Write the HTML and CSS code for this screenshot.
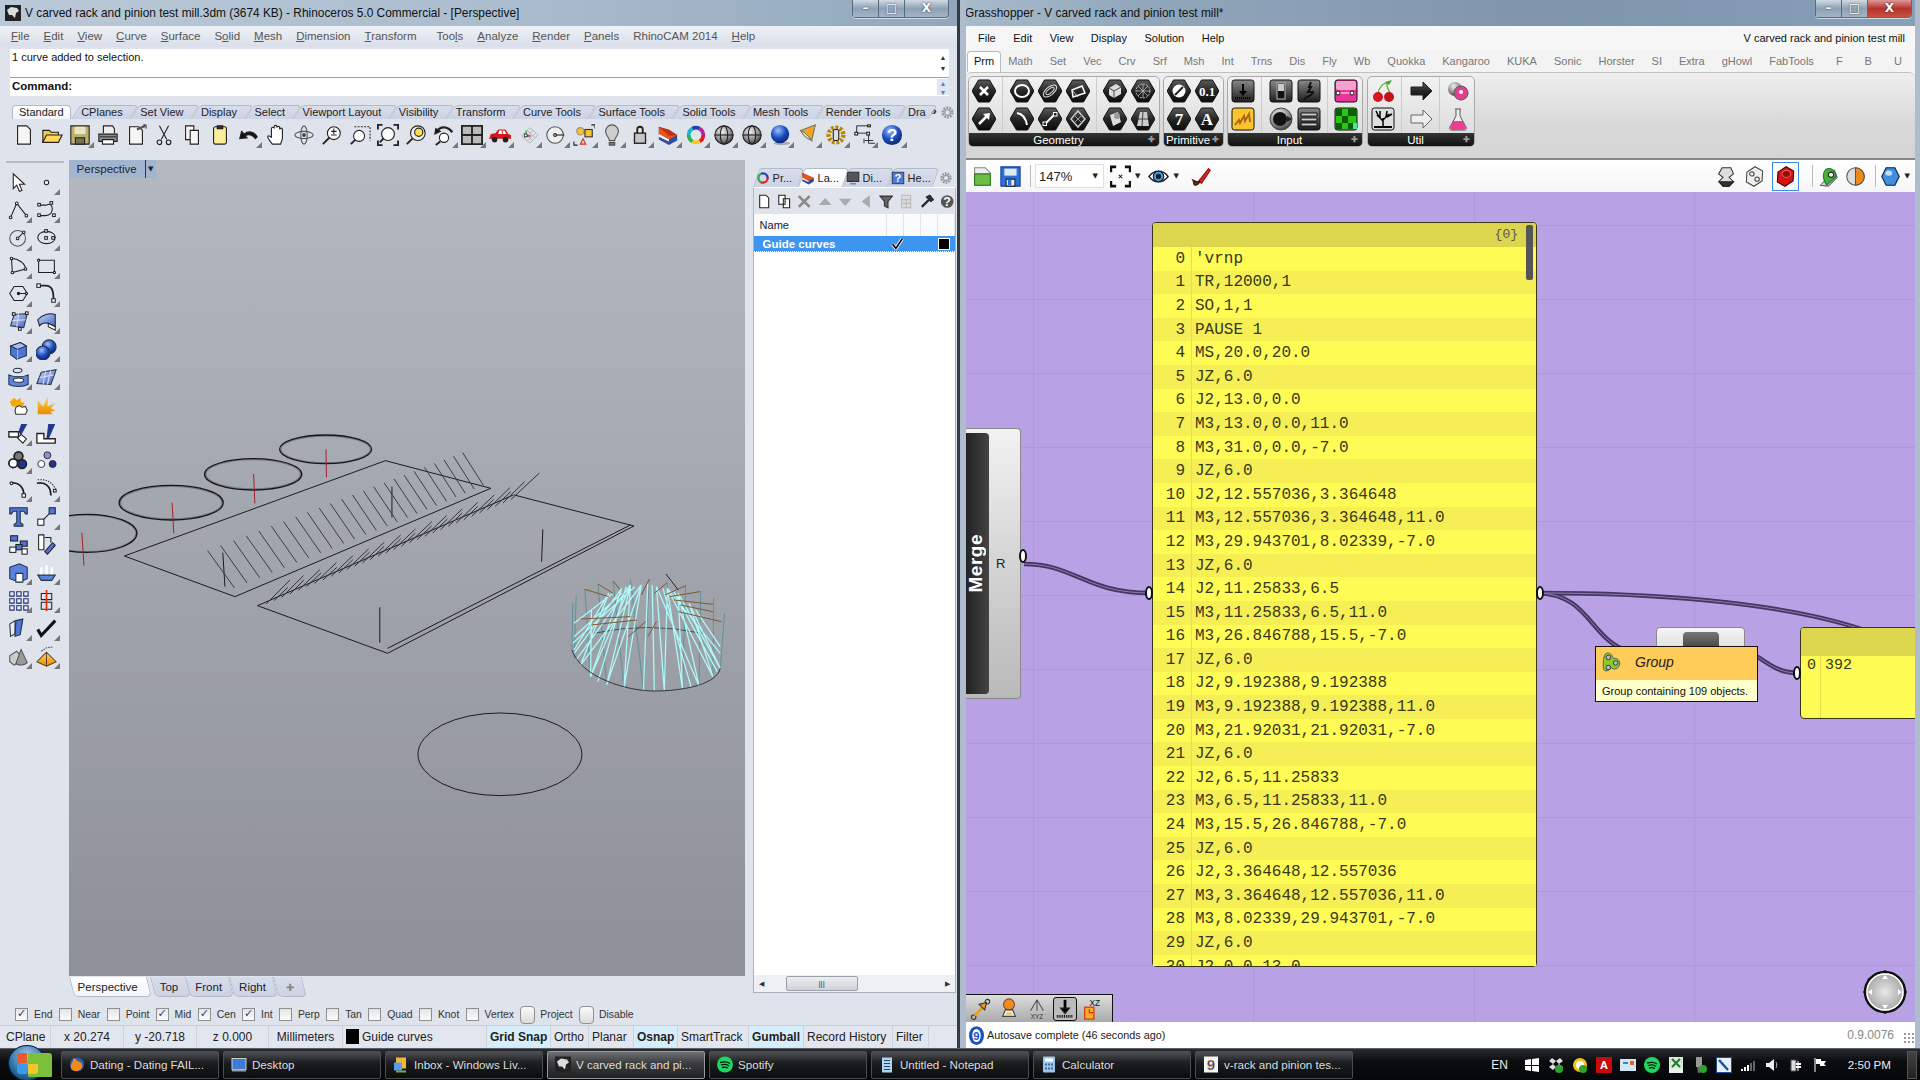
FILE: index.html
```html
<!DOCTYPE html>
<html lang="en">
<head>
  <meta charset="UTF-8">
  <title>Rhinoceros and Grasshopper</title>
  <link rel="stylesheet" href="styles.css">
</head>
<body>
<svg class="defs" aria-hidden="true">
  <defs>
    <linearGradient id="hexg" x1="0" y1="0" x2="0" y2="1"><stop offset="0" stop-color="#5c5c5c"/><stop offset=".5" stop-color="#262626"/><stop offset="1" stop-color="#0c0c0c"/></linearGradient>
    <linearGradient id="boxg" x1="0" y1="0" x2="0" y2="1"><stop offset="0" stop-color="#8a8a8a"/><stop offset="1" stop-color="#1c1c1c"/></linearGradient>
    <radialGradient id="grey" cx=".4" cy=".3" r=".8"><stop offset="0" stop-color="#eee"/><stop offset=".6" stop-color="#888"/><stop offset="1" stop-color="#222"/></radialGradient>
    <radialGradient id="blue" cx=".4" cy=".3" r=".8"><stop offset="0" stop-color="#9fc0ff"/><stop offset=".5" stop-color="#1c4fc0"/><stop offset="1" stop-color="#081a60"/></radialGradient>
    <radialGradient id="dial" cx=".5" cy=".5" r=".5"><stop offset="0" stop-color="#e8e8e8"/><stop offset="1" stop-color="#a4a4a4"/></radialGradient>
    <linearGradient id="bl" x1="0" y1="0" x2="1" y2="1"><stop offset="0" stop-color="#c8d6f5"/><stop offset="1" stop-color="#3f63c8"/></linearGradient>
    <linearGradient id="gold" x1="0" y1="0" x2="0" y2="1"><stop offset="0" stop-color="#ffd75a"/><stop offset="1" stop-color="#e98a00"/></linearGradient>
    <path id="hex" d="M6.5 1h11L24 12l-6.5 11h-11L0 12z" fill="url(#hexg)" stroke="#111"/>
    <rect id="bx" x="1" y="1" width="22" height="22" rx="2.5" fill="url(#boxg)" stroke="#111"/>
  </defs>
</svg>

<main class="desk">
  <!-- Rhino window -->
  <section class="win rhino">
    <header class="title">
      <svg class="i app sn" viewBox="0 0 16 16"><rect width="16" height="16" fill="#222"/><path d="M2 5l4-3 6 1 2 3-3 2-1 5-3-3-3 0z" fill="#ddd"/></svg>
      <span class="title-text">V carved rack and pinion test mill.3dm (3674 KB) - Rhinoceros 5.0 Commercial - [Perspective]</span>
      <div class="caps"><span class="cap">&#8211;</span><span class="cap">&#9633;</span><span class="cap close">X</span></div>
    </header>
    <nav class="menu">
      <span><u>F</u>ile</span><span><u>E</u>dit</span><span><u>V</u>iew</span><span><u>C</u>urve</span><span><u>S</u>urface</span><span>S<u>o</u>lid</span><span><u>M</u>esh</span><span><u>D</u>imension</span><span class="wide"><u>T</u>ransform</span><span>Too<u>l</u>s</span><span><u>A</u>nalyze</span><span><u>R</u>ender</span><span><u>P</u>anels</span><span>RhinoCAM 2014</span><span><u>H</u>elp</span>
    </nav>
    <div class="cmd-box history"><span>1 curve added to selection.</span><div class="spin"><i>&#9650;</i><i>&#9660;</i></div></div>
    <div class="cmd-box prompt"><b>Command:</b><div class="spin boxed"><i>&#9650;</i><i>&#9660;</i></div></div>

    <div class="tabs tool-tabs">
      <span class="tab on">Standard</span><span class="tab">CPlanes</span><span class="tab">Set View</span><span class="tab">Display</span><span class="tab">Select</span><span class="tab">Viewport Layout</span><span class="tab">Visibility</span><span class="tab">Transform</span><span class="tab">Curve Tools</span><span class="tab">Surface Tools</span><span class="tab">Solid Tools</span><span class="tab">Mesh Tools</span><span class="tab">Render Tools</span><span class="tab last">Dra</span>
      <b class="more">&raquo;</b>
      <svg class="i gear" viewBox="0 0 16 16"><circle cx="8" cy="8" r="5" stroke="#999" stroke-width="3" stroke-dasharray="2 1.1"/><circle cx="8" cy="8" r="3" stroke="#999"/></svg>
    </div>

    <div class="bar">
      <span class="t"><svg class="i" viewBox="0 0 24 24"><path d="M5 2h10l4 4v16H5z" fill="#f6f6f6"/></svg></span>
      <span class="t"><svg class="i" viewBox="0 0 24 24"><path d="M2 20V7h7l2 2h8v3" fill="#f2c94a"/><path d="M2 20l4-8h17l-4 8z" fill="#ffd75a"/></svg></span>
      <span class="t fly"><svg class="i" viewBox="0 0 24 24"><path d="M2 2h20v20H2z" fill="#bdb06e"/><path d="M6 3h12v8H6z" fill="#e8e4c8" stroke="none"/><path d="M7 15h10v7H7z" fill="#77704a"/></svg></span>
      <span class="t"><svg class="i" viewBox="0 0 24 24"><path d="M7 10V2h10l2 3v5" fill="#eee"/><path d="M2 11h20v8H2z" fill="#8d8d8d"/><path d="M6 17h12v5H6z" fill="#fff"/><path d="M3 14h18" stroke="#333"/></svg></span>
      <span class="t"><svg class="i" viewBox="0 0 24 24"><path d="M5 3h10l4 4v15H5z" fill="#f6f6f6"/><path d="M13 6l9-4" stroke-width="2.5" stroke="#555"/><path d="M20 1h3v4" stroke-width="1"/></svg></span>
      <span class="t"><svg class="i" viewBox="0 0 24 24"><path d="M7 2l8 15M17 2L9 17"/><circle cx="7" cy="20" r="2.5"/><circle cx="17" cy="20" r="2.5"/></svg></span>
      <span class="t"><svg class="i" viewBox="0 0 24 24"><path d="M5 2h9v15H5z" fill="#f6f6f6"/><path d="M10 7h9v15h-9z" fill="#f6f6f6"/></svg></span>
      <span class="t"><svg class="i" viewBox="0 0 24 24"><rect x="5" y="3" width="14" height="19" rx="2" fill="#f8ee9c"/><path d="M9 2h6v3H9z" fill="#333"/></svg></span>
      <span class="t fly"><svg class="i" viewBox="0 0 24 24"><path d="M22 14C19 8 12 7 8 11L5 8 3 16l8-1-2-2c3-2 8-2 11 3z" fill="#111"/></svg></span>
      <span class="t"><svg class="i" viewBox="0 0 24 24"><path d="M8 22c-2-3-5-6-5-8s3-1 4 1V5c0-2 3-2 3 0V3c0-2 3-2 3 0v1c0-2 3-2 3 0v2c0-2 3-2 3 0v10l-2 6z" fill="#fff"/></svg></span>
      <span class="t"><svg class="i sg" viewBox="0 0 24 24"><ellipse cx="12" cy="12" rx="10" ry="4"/><ellipse cx="12" cy="12" rx="3.5" ry="10"/><circle cx="12" cy="12" r="1.5" fill="#222"/></svg></span>
      <span class="t"><svg class="i" viewBox="0 0 24 24"><circle cx="14" cy="10" r="7" fill="#fff"/><path d="M9 15l-7 7" stroke-width="2"/><path d="M11 8h6M14 5v6M11 12h6"/></svg></span>
      <span class="t"><svg class="i" viewBox="0 0 24 24"><circle cx="11" cy="13" r="6" fill="#fff"/><path d="M7 17l-5 5" stroke-width="2"/><path d="M6 3h17v15" stroke-dasharray="2 1.5"/></svg></span>
      <span class="t"><svg class="i" viewBox="0 0 24 24"><circle cx="12" cy="11" r="7" fill="#fff"/><path d="M7 16l-4 4" stroke-width="2"/><path d="M1 6V1h5M18 1h5v5M1 18v5h5M18 23h5v-5" stroke-width="2"/></svg></span>
      <span class="t"><svg class="i" viewBox="0 0 24 24"><circle cx="14" cy="10" r="8" fill="#eee"/><circle cx="15" cy="9" r="4.5" fill="#ffe14d"/><path d="M8 16l-6 6" stroke-width="2"/></svg></span>
      <span class="t fly"><svg class="i" viewBox="0 0 24 24"><circle cx="12" cy="15" r="5" fill="#fff"/><path d="M8 19l-5 4" stroke-width="2"/><path d="M4 8C8 2 16 2 21 9" stroke-width="2.5"/><path d="M2 11l1-6 5 3z" fill="#111"/></svg></span>
      <span class="t fly"><svg class="i" viewBox="0 0 24 24"><path d="M1 2h22v20H1z" fill="#bbb" stroke-width="2"/><path d="M12 2v20M1 12h22" stroke-width="2"/></svg></span>
      <span class="t fly"><svg class="i" viewBox="0 0 24 24"><path d="M0 16l2-5 5-1 3-4h8l3 5 3 1v4z" fill="#d3171c" stroke="none"/><path d="M11 7h3v4h-4zM15 7h2l2 4h-4z" fill="#fff" stroke="none"/><circle cx="6" cy="17" r="2.5" fill="#222"/><circle cx="18" cy="17" r="2.5" fill="#222"/></svg></span>
      <span class="t fly"><svg class="i sl" viewBox="0 0 24 24"><path d="M5 13L14 4l9 8-9 9zM8 10l9 8M11 7l9 8M8 16l9-9M11 19l9-9"/><path d="M10 13h5" stroke="#c22" stroke-width="1.5"/><path d="M10 13V7" stroke="#1a1" stroke-width="1.2"/><rect x="8" y="11" width="3" height="3" fill="#fff" stroke="#111"/></svg></span>
      <span class="t fly"><svg class="i sg" viewBox="0 0 24 24"><circle cx="11" cy="12" r="9" fill="#eee"/><path d="M11 12h10" stroke="#222"/><circle cx="11" cy="12" r="1.5" fill="#fff" stroke="#222"/></svg></span>
      <span class="t fly"><svg class="i" viewBox="0 0 24 24"><circle cx="8" cy="8" r="4" fill="#f7c531" stroke="#a87"/><rect x="13" y="6" width="8" height="8" fill="#f7c531" stroke="#333"/><path d="M11 16l3 6H8z" fill="#f4d0b0" stroke="#c33"/><path d="M20 1h4v4M1 19v4h4"/></svg></span>
      <span class="t fly"><svg class="i sg" viewBox="0 0 24 24"><path d="M9 18c0-4-4-5-4-10a7 7 0 0 1 14 0c0 5-4 6-4 10z" fill="#ccc"/><path d="M9 20h6v3H9z" fill="#777"/></svg></span>
      <span class="t fly"><svg class="i" viewBox="0 0 24 24"><path d="M9 10V6a3 3 0 0 1 6 0v4" stroke-width="2"/><rect x="6" y="10" width="12" height="11" fill="#c7c7c7" stroke-width="1.5"/></svg></span>
      <span class="t fly"><svg class="i sn" viewBox="0 0 24 24"><path d="M2 3l20 9v6l-9 5-11-6z" fill="#2d4f9e"/><path d="M2 3l20 9-9 5-11-5z" fill="#e8561c"/><path d="M2 11l11 6v2L2 14z" fill="#fff"/><path d="M2 3l11 3 9 6-9 1z" fill="#c33210"/></svg></span>
      <span class="t fly"><svg class="i wheel" viewBox="0 0 24 24"><circle cx="12" cy="12" r="8" pathLength="6" stroke="#e31b23" stroke-dasharray="1 5"/><circle cx="12" cy="12" r="8" pathLength="6" stroke="#f7c71b" stroke-dasharray="1 5" stroke-dashoffset="-1"/><circle cx="12" cy="12" r="8" pathLength="6" stroke="#2cb34a" stroke-dasharray="1 5" stroke-dashoffset="-2"/><circle cx="12" cy="12" r="8" pathLength="6" stroke="#19b6d2" stroke-dasharray="1 5" stroke-dashoffset="-3"/><circle cx="12" cy="12" r="8" pathLength="6" stroke="#2a3fb0" stroke-dasharray="1 5" stroke-dashoffset="-4"/><circle cx="12" cy="12" r="8" pathLength="6" stroke="#c01f9a" stroke-dasharray="1 5" stroke-dashoffset="-5"/></svg></span>
      <span class="t fly"><svg class="i" viewBox="0 0 24 24"><circle cx="12" cy="12" r="10" fill="url(#grey)"/><ellipse cx="12" cy="12" rx="4" ry="10"/><path d="M2 12h20"/></svg></span>
      <span class="t fly"><svg class="i" viewBox="0 0 24 24"><path d="M0 0h24v24H0z" stroke="#ccc" stroke-dasharray="1 1.5"/><circle cx="12" cy="12" r="10" fill="url(#grey)"/><ellipse cx="12" cy="12" rx="4" ry="10"/><path d="M2 12h20"/></svg></span>
      <span class="t fly"><svg class="i sn" viewBox="0 0 24 24"><ellipse cx="14" cy="21" rx="9" ry="2" fill="#aaa"/><circle cx="12" cy="11" r="10" fill="url(#blue)"/></svg></span>
      <span class="t fly"><svg class="i" viewBox="0 0 24 24"><path d="M4 7L20 1l-4 17z" fill="#f9a31a" stroke="#776"/><path d="M4 7c4 1 9 7 12 11C11 16 6 11 4 7z" fill="#fff" stroke="#776"/></svg></span>
      <span class="t fly"><svg class="i" viewBox="0 0 24 24"><circle cx="12" cy="12" r="8" stroke="#b8860b" stroke-width="5" stroke-dasharray="3 1.6"/><rect x="9" y="6" width="6" height="12" rx="2" fill="#ddd"/></svg></span>
      <span class="t fly"><svg class="i" viewBox="0 0 24 24"><path d="M4 2h13M4 10h13V21h8M4 2v8M12 16v5M13 18h9" stroke-width="1"/><rect x="16" y="1" width="3" height="2" fill="#fff"/><rect x="2" y="9" width="3" height="3" fill="#fff"/><rect x="15" y="9" width="3" height="3" fill="#fff"/></svg></span>
      <span class="t fly"><svg class="i sn" viewBox="0 0 24 24"><circle cx="12" cy="12" r="11" fill="url(#blue)"/><text x="12" y="19" class="svg-q">?</text></svg></span>
    </div>

    <div class="work">
      <aside class="side">
        <span class="t"><svg class="i" viewBox="0 0 24 24"><path d="M6 2v17l4-4 3 7 3-1-3-7h6z" fill="#fff"/></svg></span>
        <span class="t fly"><svg class="i" viewBox="0 0 24 24"><circle cx="12" cy="12" r="2.5" fill="#fff"/></svg></span>
        <span class="t fly"><svg class="i" viewBox="0 0 24 24"><path d="M3 21L10 5l11 14"/><circle cx="3" cy="21" r="1.5" fill="#fff"/><circle cx="10" cy="5" r="1.5" fill="#fff"/><circle cx="21" cy="19" r="1.5" fill="#fff"/></svg></span>
        <span class="t fly"><svg class="i" viewBox="0 0 24 24"><path d="M4 7h8c8-5 10 12-1 12H3"/><g fill="#fff"><rect x="2" y="5" width="3" height="3"/><rect x="16" y="3" width="3" height="3"/><rect x="19" y="17" width="3" height="3"/><rect x="2" y="17" width="3" height="3"/></g></svg></span>
        <span class="t fly"><svg class="i" viewBox="0 0 24 24"><circle cx="11" cy="13" r="9" stroke="#555"/><path d="M11 13l7-7"/><circle cx="11" cy="13" r="1.5" fill="#fff"/><circle cx="18" cy="6" r="1.5" fill="#fff"/></svg></span>
        <span class="t fly"><svg class="i" viewBox="0 0 24 24"><ellipse cx="12" cy="12" rx="10" ry="7"/><g fill="#fff"><rect x="10" y="3" width="3" height="3"/><rect x="10" y="11" width="3" height="3"/><rect x="18" y="11" width="3" height="3"/></g></svg></span>
        <span class="t fly"><svg class="i" viewBox="0 0 24 24"><path d="M4 4c8 0 16 6 16 12L5 20z"/><circle cx="4" cy="4" r="1.5" fill="#fff"/><circle cx="20" cy="16" r="1.5" fill="#fff"/><circle cx="5" cy="20" r="1.5" fill="#fff"/></svg></span>
        <span class="t fly"><svg class="i" viewBox="0 0 24 24"><path d="M3 6h18v14H3z"/><circle cx="3" cy="6" r="1.3" fill="#fff"/><circle cx="21" cy="20" r="1.3" fill="#fff"/></svg></span>
        <span class="t fly"><svg class="i" viewBox="0 0 24 24"><path d="M7 4h10l5 8-5 8H7l-5-8z"/><path d="M12 12h9"/><circle cx="12" cy="12" r="1.3" fill="#222"/><circle cx="21" cy="12" r="1.3" fill="#fff"/></svg></span>
        <span class="t fly"><svg class="i" viewBox="0 0 24 24"><path d="M3 3h8c7 0 9 5 9 16" stroke-width="2"/><rect x="1" y="1" width="4" height="4" fill="#fff"/><rect x="18" y="18" width="4" height="4" fill="#fff"/></svg></span>
        <span class="t fly"><svg class="i" viewBox="0 0 24 24"><path d="M7 4l15-1-4 16-15-2z" fill="url(#bl)" stroke="#334"/><path d="M5 11l15-1M12 3l-2 15" stroke="#dde"/><g fill="#fff"><rect x="5" y="2" width="3" height="3"/><rect x="20" y="1" width="3" height="3"/><rect x="12" y="19" width="3" height="3"/></g></svg></span>
        <span class="t fly"><svg class="i" viewBox="0 0 24 24"><path d="M2 10c5-6 13-8 20-6v14l-8-4c-3-1-8 0-10 3z" fill="url(#bl)"/><path d="M14 14l8 4v4l-8-4z" fill="#fff"/></svg></span>
        <span class="t fly"><svg class="i sb" viewBox="0 0 24 24"><path d="M3 8l11-4 7 4v11l-11 4-7-5z" fill="#4f74d8"/><path d="M3 8l8 4 10-4-7-4z" fill="#a6bcf0"/><path d="M11 12v11" stroke="#abc"/></svg></span>
        <span class="t fly"><svg class="i sb" viewBox="0 0 24 24"><circle cx="15" cy="9" r="8" fill="url(#blue)"/><circle cx="8" cy="16" r="8" fill="url(#blue)"/></svg></span>
        <span class="t fly"><svg class="i sb" viewBox="0 0 24 24"><ellipse cx="11" cy="4" rx="5" ry="2.5"/><path d="M1 9c6 3 16 3 22 0v11c-6 3-16 3-22 0z" fill="#5d85e0"/><ellipse cx="12" cy="15" rx="6" ry="2.5" fill="#fff"/></svg></span>
        <span class="t fly"><svg class="i sb" viewBox="0 0 24 24"><path d="M6 6l17-3-6 17L1 19z" fill="url(#bl)"/><path d="M4 12l16-3M11 5l-3 15M17 4l-4 16" stroke="#dde"/></svg></span>
        <span class="t"><svg class="i sn" viewBox="0 0 24 24"><path d="M2 8l5-5 3 3 4-3 1 5 4 1-2 4H5z" fill="#f5a800"/><path d="M9 14l4-2 3 2 4-1 2 5-2 4H9l-1-4z" fill="#fff" stroke="#333"/></svg></span>
        <span class="t"><svg class="i sn" viewBox="0 0 24 24"><path d="M2 22V6l6 7 6-12-1 12 9-4-5 6 5 3-6 1 3 3z" fill="url(#gold)"/></svg></span>
        <span class="t fly"><svg class="i" viewBox="0 0 24 24"><path d="M1 10h11v6H1z" fill="#fff" stroke-width="1.5"/><path d="M12 10l3-9h7l-7 13z" fill="#22388a" stroke="none"/><path d="M15 13l6 5-4 5-6-6z" fill="#fff"/></svg></span>
        <span class="t"><svg class="i" viewBox="0 0 24 24"><path d="M1 12h8v6h13v5H1z" fill="#fff" stroke-width="1.5"/><path d="M12 17L14 1h8l-7 16z" fill="#22388a" stroke="none"/></svg></span>
        <span class="t fly"><svg class="i w2" viewBox="0 0 24 24"><circle cx="12" cy="7" r="5" fill="#777"/><circle cx="6" cy="15" r="5" fill="#fff"/><circle cx="16" cy="16" r="5" fill="#22338a"/></svg></span>
        <span class="t"><svg class="i w1" viewBox="0 0 24 24"><circle cx="13" cy="6" r="4" fill="#8c8ce0"/><circle cx="6" cy="16" r="4" fill="#fff"/><circle cx="19" cy="16" r="4" fill="#22338a"/></svg></span>
        <span class="t fly"><svg class="i" viewBox="0 0 24 24"><path d="M2 6c10-2 16 4 16 13" stroke-width="2"/><circle cx="4" cy="6" r="1.6" fill="#fff"/><rect x="16" y="18" width="4" height="4" fill="#fff"/></svg></span>
        <span class="t fly"><svg class="i" viewBox="0 0 24 24"><path d="M1 6c10-2 16 4 16 14" stroke-width="2"/><path d="M2 2h6c8 1 13 6 15 13" stroke-dasharray="1.5 1.5"/><rect x="20" y="13" width="3" height="3" fill="#fff"/></svg></span>
        <span class="t"><svg class="i sb" viewBox="0 0 24 24"><path d="M2 2h20v7h-2l-2-3h-4v13l3 2v2H7v-2l3-2V6H6L4 9H2z" fill="#4f74d8"/></svg></span>
        <span class="t fly"><svg class="i" viewBox="0 0 24 24"><rect x="2" y="15" width="7" height="7" fill="#fff"/><rect x="15" y="2" width="7" height="7" fill="#4f74d8"/><path d="M9 15l6-6"/></svg></span>
        <span class="t"><svg class="i" viewBox="0 0 24 24"><rect x="3" y="2" width="8" height="6" fill="#4f74d8"/><rect x="14" y="8" width="8" height="6" fill="#4f74d8"/><rect x="9" y="12" width="7" height="6" fill="#4f74d8"/><rect x="2" y="15" width="7" height="6" fill="#fff"/><rect x="16" y="17" width="6" height="6" fill="#fff"/></svg></span>
        <span class="t"><svg class="i" viewBox="0 0 24 24"><path d="M3 1h6v17H3z" fill="#fff"/><path d="M22 13l-9 10-3-3 9-10z" fill="#4f74d8"/><path d="M10 4h7v6"/></svg></span>
        <span class="t fly"><svg class="i sb" viewBox="0 0 24 24"><path d="M2 6l11-4 9 4v13l-9 4-11-4z" fill="#5a82e0"/><path d="M9 13h8v10H9z" fill="#fff"/></svg></span>
        <span class="t fly"><svg class="i sb" viewBox="0 0 24 24"><path d="M2 15h20l-4 6H6z" fill="#5a82e0"/><path d="M6 14V6M12 14V4M18 14V6" stroke="#fff" stroke-width="2.5"/></svg></span>
        <span class="t fly"><svg class="i dots" viewBox="0 0 24 24"><path d="M2 2h5v5H2zM10 2h5v5h-5zM18 2h5v5h-5zM2 10h5v5H2zM10 10h5v5h-5zM18 10h5v5h-5zM2 18h5v5H2zM10 18h5v5h-5zM18 18h5v5h-5z"/></svg></span>
        <span class="t fly"><svg class="i" viewBox="0 0 24 24"><path d="M6 4h12v7H6zM6 14h12v8H6z"/><path d="M12 0v24" stroke="#d31" stroke-width="2"/></svg></span>
        <span class="t fly"><svg class="i sb" viewBox="0 0 24 24"><path d="M2 7l6-4v15l-5 3z" fill="#eee"/><path d="M9 3l8-2-3 18-6 2z" fill="#4f74d8"/></svg></span>
        <span class="t fly"><svg class="i" viewBox="0 0 24 24"><path d="M2 13l4 7L22 3" stroke-width="3.5" stroke="#111"/></svg></span>
        <span class="t fly"><svg class="i sg" viewBox="0 0 24 24"><path d="M2 11l8-5 5 6v6l-8 4-5-4z" fill="#ccc"/><path d="M15 4l-6 16c4 3 10 2 13-1z" fill="#999"/></svg></span>
        <span class="t fly"><svg class="i sbr" viewBox="0 0 24 24"><path d="M12 7L1 18l11 5 11-5z" fill="url(#gold)"/><path d="M12 7v16"/><path d="M6 6l6-4 7-1" stroke="#555" stroke-dasharray="2 1"/></svg></span>
      </aside>

      <div class="vp-col">
        <div class="viewport">
          <div class="vp-head"><span>Perspective</span><b>&#9660;</b></div>
          <svg class="scene" viewBox="68 160 676 816">
            <g transform="translate(70 420) scale(.4337 .3333)">
              <g class="ln ring" stroke="#777a81">
                <ellipse cx="37" cy="340" rx="113" ry="55"/><ellipse cx="231" cy="248" rx="117" ry="49"/><ellipse cx="420" cy="163" rx="109" ry="44"/><ellipse cx="587" cy="88" rx="103" ry="40"/>
              </g>
              <g class="ln ring" stroke="#161616">
                <ellipse cx="37" cy="340" rx="115" ry="57"/><ellipse cx="231" cy="248" rx="120" ry="52"/><ellipse cx="420" cy="163" rx="112" ry="47"/><ellipse cx="587" cy="88" rx="106" ry="43"/>
              </g>
              <g class="ln" stroke="#1c1c1c">
                <path d="M725 122L968 205 378 530 123 408Z"/>
                <path d="M1022 225L1298 318 730 700 430 557 1020 225"/>
                <path d="M1290 315L730 685"/>
                <path d="M350 398l5 102M740 200v92M712 562v106M1088 328l-3 97"/>
                <ellipse cx="989" cy="1003" rx="189" ry="124"/>
              </g>
              <path class="ln" stroke="#a6222e" d="M25 338l5 99M233 248l4 92M421 162l3 88M588 88l1 84"/>
              <path class="ln" stroke="#3b3d42" d="M315 392l62 112M345 377l61 112M375 362l60 111M404 347.500l60 110M433 333l59 110M462 318.500l59 109M490 304.500l58 109M518 290.500l58 108M545 277l57 108M572 263.500l57 107M598 250.500l56 107M624 237.500l56 106M649 225l55 106M674 212.500l55 105M698 200.500l54 105M722 188.500l54 104M745 177l53 104M768 165.500l53 103M791 154l52 103M815 142l51 102M838 130.500l50 101M860 119.500l49 100M882 108.500l48 99M903 98l48 98"/>
              <path class="ln" stroke="#33353a" d="M450 552l55-72M468 542l32-40M486 532l50-65M505 522l32-42M524 511l50-62M543 500l34-42M562 490l50-62M581 480l32-38M600 469l50-62M618 459l32-40M636 449l50-62M654 439l34-42M672 429l50-62M690 419l32-40M708 409l52-64M726 399l34-42M744 389l50-62M762 379l32-40M780 369l52-64M798 359l34-42M816 349l50-62M834 339l34-42M852 329l50-62M870 319l32-40M888 309l50-62M906 299l32-40M924 289l52-64M942 279l32-40M960 269l52-66M978 259l36-44M996 249l50-64M1014 239l66-80"/>
              <g class="ln">
                <path stroke="#5e9498" d="M1157 548l-2 142M1165 527l-5 188M1185 508l13 262M1215 492l20 303M1250 482l25 323M1290 478l30 334M1333 478l-13 334M1375 488l-7 324M1417 497l-7 311M1452 513l-4 284M1482 533l-2 237M1507 580l-10 165"/>
                <path stroke="#3e5258" d="M1205 640Q1330 605 1455 640"/>
                <path class="cyan" stroke="#aef8f8" d="M1160 690L1240 520M1160 700L1270 505M1165 720L1290 495M1175 735L1240 520M1175 735L1315 495M1198 770L1290 495M1198 770L1270 505M1198 770L1200 570M1235 795L1290 495M1235 795L1315 495M1275 805L1290 495M1275 805L1315 495M1320 810L1330 490M1368 812L1350 500M1368 812L1375 505M1410 806L1375 505M1410 806L1400 520M1448 797L1350 500M1448 797L1400 520M1480 770L1375 505M1480 770L1425 550M1497 745L1400 520M1497 745L1425 550M1497 700L1375 505M1160 650L1270 520M1160 610L1250 520M1157 670L1300 500M1215 785L1280 500M1345 812L1340 495M1430 802L1365 505M1490 755L1390 515M1497 680L1440 570"/>
                <path class="brown" stroke="#7c5a2c" d="M1175 597l115-7M1200 615l105-15M1285 650l40-45M1330 650l20-45M1380 530l70-15M1390 540l90 13M1405 555l75 20M1400 575l100 30M1250 483l15 25M1215 492l35 28M1185 508l55 22M1333 478l-18 47M1375 488l-30 32M1417 497l-47 28"/>
                <path stroke="#25272c" d="M1372 462l28 48"/>
                <path stroke="#33363c" d="M1155 690C1175 770 1280 815 1350 813 1420 812 1490 790 1497 745"/>
              </g>
            </g>
          </svg>
        </div>
        <div class="tabs vp-tabs">
          <span class="tab on">Perspective</span><span class="tab">Top</span><span class="tab">Front</span><span class="tab">Right</span><span class="tab plus">&#10010;</span>
        </div>
      </div>

      <aside class="panel">
        <div class="tabs panel-tabs">
          <span class="tab"><svg class="i wheel" viewBox="0 0 24 24"><circle cx="12" cy="12" r="8" pathLength="3" stroke="#e3261b" stroke-dasharray="1 2"/><circle cx="12" cy="12" r="8" pathLength="3" stroke="#2cb34a" stroke-dasharray="1 2" stroke-dashoffset="-1"/><circle cx="12" cy="12" r="8" pathLength="3" stroke="#2a3fb0" stroke-dasharray="1 2" stroke-dashoffset="-2"/></svg>Pr...</span>
          <span class="tab on"><svg class="i sn" viewBox="0 0 24 24"><path d="M2 3l20 9v6l-9 5-11-6z" fill="#2d4f9e"/><path d="M2 3l20 9-9 5-11-5z" fill="#e8561c"/><path d="M2 11l11 6v2L2 14z" fill="#fff"/></svg>La...</span>
          <span class="tab"><svg class="i" viewBox="0 0 24 24"><rect x="2" y="2" width="20" height="16" fill="#555" stroke-width="1.5"/><path d="M7 22h10"/></svg>Di...</span>
          <span class="tab"><svg class="i" viewBox="0 0 24 24"><rect x="2" y="2" width="20" height="20" fill="#4a7bd8"/><text x="12" y="19" class="svg-q">?</text></svg>He...</span>
          <svg class="i gear" viewBox="0 0 16 16"><circle cx="8" cy="8" r="5" stroke="#999" stroke-width="3" stroke-dasharray="2 1.1"/><circle cx="8" cy="8" r="3" stroke="#999"/></svg>
        </div>
        <div class="panel-tools">
          <svg class="i" viewBox="0 0 16 16"><path d="M3 1h7l3 3v11H3z" fill="#fff"/></svg>
          <svg class="i" viewBox="0 0 16 16"><path d="M2 1h7v10H2zM7 5h7v10H7z" fill="#fff"/></svg>
          <svg class="i" viewBox="0 0 16 16"><path d="M2 2l12 12M14 2L2 14" stroke="#888" stroke-width="3"/></svg>
          <svg class="i" viewBox="0 0 16 16"><path d="M8 4l7 8H1z" fill="#aaa" stroke="none"/></svg>
          <svg class="i" viewBox="0 0 16 16"><path d="M8 13l7-8H1z" fill="#aaa" stroke="none"/></svg>
          <svg class="i" viewBox="0 0 16 16"><path d="M3 8l9-7v14z" fill="#aaa" stroke="none"/></svg>
          <svg class="i" viewBox="0 0 16 16"><path d="M1 2h14L10 8v7l-4-2V8z" fill="#666" stroke="#333"/></svg>
          <svg class="i sl" viewBox="0 0 16 16"><path d="M3 1h10v14H3zM3 6h10M3 10h10M8 6v9" fill="#ddd"/></svg>
          <svg class="i" viewBox="0 0 16 16"><path d="M2 14l8-8" stroke-width="2.5"/><path d="M7 3l4-2 4 5-3 2z" fill="#333"/></svg>
          <svg class="i sn" viewBox="0 0 16 16"><circle cx="8" cy="8" r="7" fill="#555"/><text x="8" y="13" class="svg-q small">?</text></svg>
        </div>
        <div class="layers">
          <div class="layer-head"><span class="lh-name">Name</span><span></span><span></span><span></span><span></span></div>
          <div class="layer-row"><span class="lr-name">Guide curves</span><svg class="i check" viewBox="0 0 16 16"><path d="M2 9l4 5 8-12" stroke="#fff" stroke-width="4"/><path d="M2 9l4 5 8-12" stroke="#000" stroke-width="2"/></svg><i class="swatch"></i></div>
        </div>
        <div class="hscroll"><i>&#9664;</i><span class="thumb">|||</span><i>&#9654;</i></div>
      </aside>
    </div>

    <div class="osnaps">
      <label class="snap"><i class="box on"></i>End</label><label class="snap"><i class="box"></i>Near</label><label class="snap"><i class="box"></i>Point</label><label class="snap"><i class="box on"></i>Mid</label><label class="snap"><i class="box on"></i>Cen</label><label class="snap"><i class="box on"></i>Int</label><label class="snap"><i class="box"></i>Perp</label><label class="snap"><i class="box"></i>Tan</label><label class="snap"><i class="box"></i>Quad</label><label class="snap"><i class="box"></i>Knot</label><label class="snap"><i class="box"></i>Vertex</label><label class="snap"><i class="box round"></i>Project</label><label class="snap"><i class="box round"></i>Disable</label>
    </div>

    <footer class="status">
      <span class="c w51">CPlane</span><span class="c w73 ctr">x 20.274</span><span class="c w73 ctr">y -20.718</span><span class="c w72 ctr">z 0.000</span><span class="c w74 ctr">Millimeters</span><span class="c w144"><i class="swatch big"></i>Guide curves</span>
      <span class="c w62 lit">Grid Snap</span><span class="c w38">Ortho</span><span class="c w46">Planar</span><span class="c w45 lit">Osnap</span><span class="c w71">SmartTrack</span><span class="c w55 lit">Gumball</span><span class="c w89">Record History</span><span class="c w36">Filter</span>
    </footer>
  </section>

  <!-- Grasshopper window -->
  <section class="win gh">
    <header class="title">
      <span class="title-text">Grasshopper - V carved rack and pinion test mill*</span>
      <div class="caps"><span class="cap">&#8211;</span><span class="cap">&#9633;</span><span class="cap close red">X</span></div>
    </header>
    <nav class="gh-menu">
      <span>File</span><span>Edit</span><span>View</span><span>Display</span><span>Solution</span><span>Help</span>
      <span class="doc-name">V carved rack and pinion test mill</span>
    </nav>
    <div class="gh-tabs">
      <span class="on">Prm</span><span>Math</span><span>Set</span><span>Vec</span><span>Crv</span><span>Srf</span><span>Msh</span><span>Int</span><span>Trns</span><span>Dis</span><span>Fly</span><span>Wb</span><span>Quokka</span><span>Kangaroo</span><span>KUKA</span><span>Sonic</span><span>Horster</span><span>SI</span><span>Extra</span><span>gHowl</span><span>FabTools</span><span class="sp">F</span><span class="sp">B</span><span class="sp">U</span>
    </div>

    <div class="ribbon">
      <div class="rp">
        <div class="rp-body">
          <div class="gp">
            <svg class="g" viewBox="0 0 24 24"><use href="#hex"/><path d="M8 8l8 8M16 8l-8 8" stroke="#fff" stroke-width="2.5"/></svg>
            <svg class="g" viewBox="0 0 24 24"><use href="#hex"/><path d="M7 17L16 8" stroke="#fff" stroke-width="2.5"/><path d="M18 6l-1 7-6-6z" fill="#fff"/></svg>
          </div>
          <div class="gp">
            <svg class="g" viewBox="0 0 24 24"><use href="#hex"/><ellipse cx="12" cy="12" rx="7" ry="6" stroke="#fff" stroke-width="2" fill="none"/></svg>
            <svg class="g" viewBox="0 0 24 24"><use href="#hex"/><path d="M7 6c6 1 9 6 10 12" stroke="#fff" stroke-width="2" fill="none"/></svg>
            <svg class="g" viewBox="0 0 24 24"><use href="#hex"/><ellipse cx="12" cy="12" rx="8" ry="4" transform="rotate(-40 12 12)" stroke="#ddd" fill="none"/><ellipse cx="12" cy="12" rx="5" ry="2" transform="rotate(-40 12 12)" stroke="#ddd" fill="none"/></svg>
            <svg class="g" viewBox="0 0 24 24"><use href="#hex"/><path d="M7 17L17 7" stroke="#fff" stroke-width="2"/><rect x="5" y="15" width="3.500" height="3.500" fill="#222" stroke="#fff"/><rect x="15.500" y="5.500" width="3.500" height="3.500" fill="#222" stroke="#fff"/></svg>
            <svg class="g" viewBox="0 0 24 24"><use href="#hex"/><path d="M6 11l10-4 3 7-12 4z" fill="none" stroke="#fff" stroke-width="1.5"/><path d="M6 11l6 7" stroke="#ccc"/></svg>
            <svg class="g" viewBox="0 0 24 24"><use href="#hex"/><path d="M12 4l7 8-7 8-7-8z" fill="none" stroke="#ccc" stroke-width="1.5"/><path d="M8 8l8 8M16 8l-8 8" stroke="#999"/></svg>
          </div>
          <div class="gp">
            <svg class="g" viewBox="0 0 24 24"><use href="#hex"/><path d="M6 9l7-4 5 3v7l-7 4-5-3z" fill="#ddd"/><path d="M6 9l5 3 7-4M11 12v7" stroke="#444" fill="none"/></svg>
            <svg class="g" viewBox="0 0 24 24"><use href="#hex"/><path d="M7 8l8-3 3 10-8 4z" fill="#ddd"/><ellipse cx="14" cy="9" rx="3" ry="3" fill="#999"/></svg>
            <svg class="g" viewBox="0 0 24 24"><use href="#hex"/><circle cx="12" cy="12" r="7" fill="none" stroke="#bbb" stroke-dasharray="2 1"/><path d="M5 12h14M12 5v14M7 7l10 10M17 7L7 17" stroke="#bbb" stroke-width=".8"/></svg>
            <svg class="g" viewBox="0 0 24 24"><use href="#hex"/><path d="M9 5h7l2 14H6z" fill="#ccc"/><path d="M12 5l-1 14M7 12h10" stroke="#444"/></svg>
          </div>
        </div>
        <div class="rp-foot"><span>Geometry</span><b>&#10010;</b></div>
      </div>
      <div class="rp">
        <div class="rp-body">
          <div class="gp">
            <svg class="g" viewBox="0 0 24 24"><use href="#hex"/><circle cx="12" cy="12" r="6.500" fill="#fff"/><path d="M8 16l8-8" stroke="#222" stroke-width="2"/></svg>
            <svg class="g" viewBox="0 0 24 24"><use href="#hex"/><text x="12" y="18" class="gt">7</text></svg>
            <svg class="g" viewBox="0 0 24 24"><use href="#hex"/><text x="12" y="17" class="gt sm">0.1</text></svg>
            <svg class="g" viewBox="0 0 24 24"><use href="#hex"/><text x="12" y="18" class="gt">A</text></svg>
          </div>
        </div>
        <div class="rp-foot"><span>Primitive</span><b>&#10010;</b></div>
      </div>
      <div class="rp">
        <div class="rp-body">
          <div class="gp">
            <svg class="g" viewBox="0 0 24 24"><use href="#bx"/><path d="M12 5v9" stroke="#000" stroke-width="2"/><path d="M8 12h8l-4 5z" fill="#000"/><path d="M4 19h16" stroke="#000" stroke-dasharray="1 1" stroke-width="2"/></svg>
            <svg class="g" viewBox="0 0 24 24"><rect x="1" y="1" width="22" height="22" rx="2.500" fill="#f9c52b" stroke="#111"/><path d="M4 18l4-5 1 3 4-7 1 5 4-7 1 8" stroke="#b0641a" stroke-width="2" fill="none"/></svg>
          </div>
          <div class="gp">
            <svg class="g" viewBox="0 0 24 24"><use href="#bx"/><rect x="8" y="4" width="8" height="16" fill="#111" stroke="#bbb"/><rect x="9" y="5" width="6" height="7" fill="#ccc"/></svg>
            <svg class="g" viewBox="0 0 24 24"><circle cx="12" cy="12" r="11" fill="url(#grey)" stroke="#444"/><circle cx="11" cy="12" r="7" fill="#111"/><path d="M18 9l5 3-5 3z" fill="#222"/></svg>
            <svg class="g" viewBox="0 0 24 24"><use href="#bx"/><path d="M7 21c0-3 9-4 9-8l-5 0 3-5-2 0 2-5" stroke="#111" stroke-width="2" fill="none"/></svg>
            <svg class="g" viewBox="0 0 24 24"><use href="#bx"/><path d="M4 6h16v3H4zM4 11h16v3H4zM4 16h16v3H4z" fill="#ccc" stroke="#111"/></svg>
          </div>
          <div class="gp">
            <svg class="g" viewBox="0 0 24 24"><rect x="1" y="1" width="22" height="22" rx="2.500" fill="#e8339a" stroke="#111"/><rect x="2" y="2" width="20" height="9" rx="2" fill="#f2a3cc"/><path d="M3 14h18" stroke="#fff" stroke-width="1"/><circle cx="4" cy="14" r="2" fill="#fff" stroke="#111"/><circle cx="18" cy="14" r="2" fill="#fff" stroke="#111"/></svg>
            <svg class="g" viewBox="0 0 24 24"><rect x="1" y="1" width="22" height="22" rx="2.500" fill="#2fc317" stroke="#111"/><path d="M2 2h6v7H2zM14 2h8v7h-8zM8 9h6v7H8zM2 16h6v6H2zM14 16h8v6h-8z" fill="#0b5e06"/><path d="M19 16h4v6h-4z" fill="#45e8a0"/></svg>
          </div>
        </div>
        <div class="rp-foot"><span>Input</span><b>&#10010;</b></div>
      </div>
      <div class="rp">
        <div class="rp-body">
          <div class="gp">
            <svg class="g" viewBox="0 0 24 24"><path d="M7 14c1-5 5-9 9-11M16 3c-1 5 2 8 3 11" stroke="#5a3" fill="none" stroke-width="1.2"/><path d="M14 3l7-2-3 5z" fill="#4aa228"/><circle cx="7" cy="18" r="5" fill="#d5161c"/><circle cx="18" cy="18" r="5" fill="#c5121a"/></svg>
            <svg class="g" viewBox="0 0 24 24"><rect x="1" y="1" width="22" height="22" rx="2.500" fill="#dfdfdf" stroke="#111"/><path d="M12 21V11M12 14L6 8M12 13l6-6M8 10L5 4M9 11V4M15 10l1-6M16 10l5-3" stroke="#000" stroke-width="1.5"/><path d="M3 20h18" stroke="#000" stroke-width="2"/></svg>
          </div>
          <div class="gp">
            <svg class="g" viewBox="0 0 24 24"><path d="M2 8h12V3l9 9-9 9v-5H2z" fill="url(#hexg)" stroke="#222"/></svg>
            <svg class="g" viewBox="0 0 24 24"><path d="M2 8h12V3l9 9-9 9v-5H2z" fill="#eee" stroke="#666"/></svg>
          </div>
          <div class="gp">
            <svg class="g" viewBox="0 0 24 24"><circle cx="9" cy="10" r="7" fill="url(#grey)"/><circle cx="15" cy="14" r="7" fill="#e0408f" stroke="#555"/><circle cx="15" cy="13" r="2" fill="#fff"/></svg>
            <svg class="g" viewBox="0 0 24 24"><path d="M9 2h6M10 2v7L4 20c-1 2 0 3 2 3h12c2 0 3-1 2-3L14 9V2" fill="#f0f0f0" stroke="#555"/><path d="M7 14h10l3 7-2 2H6l-2-2z" fill="#e8408f"/></svg>
          </div>
        </div>
        <div class="rp-foot"><span>Util</span><b>&#10010;</b></div>
      </div>
    </div>

    <div class="gh-bar">
      <svg class="i bar-ic" viewBox="0 0 24 24"><path d="M3 22V2h12l6 6v14z" fill="#eee" stroke="#888"/><path d="M3 22V9h18v13z" fill="#6cbc45" stroke="#2a7a18"/></svg>
      <svg class="i bar-ic save" viewBox="0 0 24 24"><path d="M1 1h22v22H1z" fill="#2d6fd8" stroke="#123f90"/><path d="M5 3h14v8H5z" fill="#dfe8f5" stroke="none"/><path d="M7 15h10v8H7z" fill="#e8eef8"/><path d="M9 16h4v6H9z" fill="#2d6fd8" stroke="none"/></svg>
      <i class="vsep"></i>
      <div class="combo"><span>147%</span><b>&#9660;</b></div>
      <svg class="i bar-ic ml" viewBox="0 0 24 24"><path d="M1 7V1h6M17 1h6v6M1 17v6h6M17 23h6v-6" stroke="#111" stroke-width="3"/><path d="M10 10l4 4M14 10l-4 4" stroke="#111"/></svg>
      <b class="drop">&#9660;</b>
      <svg class="i bar-ic" viewBox="0 0 24 24"><path d="M1 12c6-8 16-8 22 0-6 8-16 8-22 0z" fill="#fff" stroke="#222" stroke-width="1.5"/><circle cx="12" cy="12" r="6" fill="#37a3e2" stroke="#114"/><circle cx="12" cy="12" r="2.500" fill="#111"/></svg>
      <b class="drop">&#9660;</b>
      <svg class="i bar-ic pen" viewBox="0 0 24 24"><path d="M9 17L20 3l2 2L12 20z" fill="#d8261c" stroke="#811"/><path d="M2 16c2 4 0 6 3 6s5-3 5-5c-2 1-5 1-8-1z" fill="#5a2b16" stroke="#311"/></svg>
      <span class="bar-right">
        <svg class="i bar-ic" viewBox="0 0 24 24"><path d="M7 2h10l3 7-5 4 5 5-5 5H8l-5-5 5-5-5-4z" fill="#ddd" stroke="#333"/><path d="M4 18h16l-5 5H8z" fill="#333"/></svg>
        <svg class="i bar-ic" viewBox="0 0 24 24"><path d="M7 2h10l5 10-5 10H7L2 12z" transform="rotate(30 12 12)" fill="#eee" stroke="#444"/><circle cx="9" cy="9" r="2.500" stroke="#444"/><circle cx="15" cy="15" r="2.500" stroke="#444"/></svg>
        <span class="sel"><svg class="i bar-ic" viewBox="0 0 24 24"><path d="M7 2h10l5 10-5 10H7L2 12z" transform="rotate(30 12 12)" fill="#d41414" stroke="#400"/><ellipse cx="13" cy="9" rx="5" ry="4" fill="#8f0e0e" stroke="#f55"/></svg></span>
        <i class="vsep"></i>
        <svg class="i bar-ic" viewBox="0 0 24 24"><path d="M4 22L20 5l3 8-10 10z" fill="#ddd" stroke="#666"/><path d="M10 4c5-3 11 0 12 8L11 22C6 14 6 8 10 4z" fill="#4bb033" stroke="#174"/><circle cx="16" cy="10" r="3" fill="#fff"/></svg>
        <svg class="i bar-ic" viewBox="0 0 24 24"><circle cx="12" cy="12" r="10" fill="#ddd" stroke="#555"/><path d="M12 2a10 10 0 0 1 0 20z" fill="#ec8a1c" stroke="#555"/></svg>
        <i class="vsep"></i>
        <svg class="i bar-ic" viewBox="0 0 24 24"><path d="M7 2h10l5 10-5 10H7L2 12z" fill="#3f8ede" stroke="#123"/><ellipse cx="10" cy="8" rx="4" ry="3" fill="#bfe0fa" stroke="none"/></svg>
        <b class="drop">&#9660;</b>
      </span>
    </div>

    <div class="canvas">
      <svg class="wires" viewBox="966 192 949 830">
        <g class="wire-o">
          <path d="M1024 564C1075 564 1085 593 1150 593"/><path d="M1539 593C1640 593 1780 600 1870 632"/><path d="M1539 593C1590 595 1590 640 1630 652"/><path d="M1755 655C1770 665 1780 673 1797 673"/>
        </g>
        <g class="wire-i">
          <path d="M1024 564C1075 564 1085 593 1150 593"/><path d="M1539 593C1640 593 1780 600 1870 632"/><path d="M1539 593C1590 595 1590 640 1630 652"/><path d="M1755 655C1770 665 1780 673 1797 673"/>
        </g>
      </svg>

      <div class="merge">
        <div class="merge-band"><span>Merge</span></div>
        <div class="merge-out">R</div>
        <i class="port"></i>
      </div>

      <div class="panel-y main-panel">
        <i class="port in"></i>
        <i class="port out"></i>
        <div class="py-head"><span>{0}</span></div>
        <div class="py-list">
          <div class="row"><span class="n">0</span><span>'vrnp</span></div>
          <div class="row"><span class="n">1</span><span>TR,12000,1</span></div>
          <div class="row"><span class="n">2</span><span>SO,1,1</span></div>
          <div class="row"><span class="n">3</span><span>PAUSE 1</span></div>
          <div class="row"><span class="n">4</span><span>MS,20.0,20.0</span></div>
          <div class="row"><span class="n">5</span><span>JZ,6.0</span></div>
          <div class="row"><span class="n">6</span><span>J2,13.0,0.0</span></div>
          <div class="row"><span class="n">7</span><span>M3,13.0,0.0,11.0</span></div>
          <div class="row"><span class="n">8</span><span>M3,31.0,0.0,-7.0</span></div>
          <div class="row"><span class="n">9</span><span>JZ,6.0</span></div>
          <div class="row"><span class="n">10</span><span>J2,12.557036,3.364648</span></div>
          <div class="row"><span class="n">11</span><span>M3,12.557036,3.364648,11.0</span></div>
          <div class="row"><span class="n">12</span><span>M3,29.943701,8.02339,-7.0</span></div>
          <div class="row"><span class="n">13</span><span>JZ,6.0</span></div>
          <div class="row"><span class="n">14</span><span>J2,11.25833,6.5</span></div>
          <div class="row"><span class="n">15</span><span>M3,11.25833,6.5,11.0</span></div>
          <div class="row"><span class="n">16</span><span>M3,26.846788,15.5,-7.0</span></div>
          <div class="row"><span class="n">17</span><span>JZ,6.0</span></div>
          <div class="row"><span class="n">18</span><span>J2,9.192388,9.192388</span></div>
          <div class="row"><span class="n">19</span><span>M3,9.192388,9.192388,11.0</span></div>
          <div class="row"><span class="n">20</span><span>M3,21.92031,21.92031,-7.0</span></div>
          <div class="row"><span class="n">21</span><span>JZ,6.0</span></div>
          <div class="row"><span class="n">22</span><span>J2,6.5,11.25833</span></div>
          <div class="row"><span class="n">23</span><span>M3,6.5,11.25833,11.0</span></div>
          <div class="row"><span class="n">24</span><span>M3,15.5,26.846788,-7.0</span></div>
          <div class="row"><span class="n">25</span><span>JZ,6.0</span></div>
          <div class="row"><span class="n">26</span><span>J2,3.364648,12.557036</span></div>
          <div class="row"><span class="n">27</span><span>M3,3.364648,12.557036,11.0</span></div>
          <div class="row"><span class="n">28</span><span>M3,8.02339,29.943701,-7.0</span></div>
          <div class="row"><span class="n">29</span><span>JZ,6.0</span></div>
          <div class="row"><span class="n">30</span><span>J2,0.0,13.0</span></div>
        </div>
        <i class="py-scroll"></i>
      </div>

      <div class="behind"><i></i></div>

      <div class="panel-y small-panel">
        <i class="port in"></i>
        <div class="py-head"></div>
        <div class="row"><span class="n">0</span><span>392</span></div>
      </div>

      <div class="tip">
        <div class="tip-head">
          <svg class="tip-ic" viewBox="0 0 24 24"><path d="M5 3c4-3 8 2 8 5 5-1 9 3 7 8s-8 4-9 2c-2 4-7 5-8 2S2 6 5 3z" fill="#8ac926" stroke="#465"/><circle cx="8" cy="7" r="2.500" fill="#bbb" stroke="#333"/><circle cx="16" cy="13" r="2.500" fill="#bbb" stroke="#333"/><circle cx="8" cy="18" r="2.500" fill="#bbb" stroke="#333"/></svg>
          <em>Group</em>
        </div>
        <div class="tip-body">Group containing 109 objects.</div>
      </div>

      <div class="widgets">
        <svg class="i wd" viewBox="0 0 24 24"><circle cx="19" cy="4" r="2.500" stroke="#333"/><circle cx="4" cy="21" r="2.500" stroke="#333"/><path d="M5 19L17 7" stroke="#e8a21a" stroke-width="3"/><path d="M18 5l-2 8-6-6z" fill="#e8a21a" stroke="#333"/></svg>
        <svg class="i wd" viewBox="0 0 24 24"><circle cx="12" cy="7" r="6" fill="#f08a1c" stroke="#843"/><path d="M8 13h8l3 7H5z" fill="#eee" stroke="#444"/><path d="M9 16h6v2H9z" fill="#f2c21c" stroke="none"/></svg>
        <svg class="i wd sg" viewBox="0 0 24 24"><path d="M12 2l-7 12M12 2l7 12M12 2v12"/><text x="12" y="23" class="wd-t">XYZ</text></svg>
        <span class="wd-on"><svg class="i wd" viewBox="0 0 24 24"><path d="M12 2v11" stroke="#000" stroke-width="3"/><path d="M7 11h10l-5 6z" fill="#000"/><path d="M3 20h18" stroke="#000" stroke-width="3" stroke-dasharray="1 1"/></svg></span>
        <svg class="i wd" viewBox="0 0 24 24"><text x="14" y="9" class="wd-t big">XZ</text><rect x="3" y="10" width="10" height="13" fill="#f5b022" stroke="#d21"/><path d="M8 12v4h4" stroke="#d21"/></svg>
      </div>

      <svg class="compass" viewBox="0 0 48 48">
        <path d="M6 11l6-3 1 6z" fill="#111"/>
        <path d="M24 2l5 3H19zM24 46l5-3H19zM2 24l3-5v10zM46 24l-3-5v10z" fill="#111"/>
        <circle cx="24" cy="24" r="20" fill="url(#dial)" stroke="#111" stroke-width="2.5"/>
        <circle cx="24" cy="24" r="18" fill="none" stroke="#fff" stroke-width="1.5"/>
        <path d="M24 7l3 4h-6zM24 41l3-4h-6zM7 24l4-3v6zM41 24l-4-3v6z" fill="#fff"/>
      </svg>
    </div>

    <footer class="gh-status">
      <svg class="info" viewBox="0 0 16 20"><ellipse cx="8" cy="10" rx="8" ry="10" fill="#1c4fc0"/><ellipse cx="8" cy="10" rx="4.500" ry="7" fill="#fff"/><text x="8" y="15" class="svg-i">9</text></svg>
      <span>Autosave complete (46 seconds ago)</span>
      <span class="ver">0.9.0076</span><i class="grip"></i>
    </footer>
  </section>
</main>

<footer class="taskbar">
  <div class="orb">
    <i class="pane r"></i><i class="pane g"></i><i class="pane b"></i><i class="pane y"></i>
  </div>
  <div class="task">
    <svg viewBox="0 0 16 16"><circle cx="8" cy="8" r="7" fill="#2b5fb0"/><path d="M2 12C1 7 5 5 4 2c3 0 4 2 5 3 3 0 5 3 4 6-1 4-9 5-11 1z" fill="#f08a1c"/></svg>Dating - Dating FAIL...
  </div>
  <div class="task">
    <svg viewBox="0 0 16 16"><rect x="1" y="2" width="14" height="11" fill="#3b7cd8" stroke="#ccc"/><path d="M1 13h14v2H1z" fill="#999"/></svg>Desktop
  </div>
  <div class="task">
    <svg viewBox="0 0 16 16"><rect x="3" y="1" width="10" height="11" fill="#f2b632"/><rect x="1" y="6" width="8" height="8" fill="#5a9cf0"/><path d="M3 14h10v2H3z" fill="#6ab04c"/></svg>Inbox - Windows Liv...
  </div>
  <div class="task on">
    <svg viewBox="0 0 16 16"><rect width="16" height="16" fill="#222"/><path d="M2 5l4-3 6 1 2 3-3 2-1 5-3-3-3 0z" fill="#ddd"/></svg>V carved rack and pi...
  </div>
  <div class="task">
    <svg viewBox="0 0 16 16"><circle cx="8" cy="8" r="8" fill="#1ed760"/><path d="M3 6c4-1 7-1 10 1M4 8.500c3-1 6-1 8 1M5 11c2-.5 4-.5 6 .5" stroke="#111" stroke-width="1.3" fill="none"/></svg>Spotify
  </div>
  <div class="task">
    <svg viewBox="0 0 16 16"><path d="M3 1h10v15H3z" fill="#a8d4f5"/><path d="M5 4h6M5 7h6M5 10h6M5 13h6" stroke="#345"/></svg>Untitled - Notepad
  </div>
  <div class="task">
    <svg viewBox="0 0 16 16"><rect x="2" y="0" width="12" height="16" rx="1" fill="#9fc6ea"/><rect x="4" y="2" width="8" height="3" fill="#fff"/><path d="M4 7h2v2H4zM7 7h2v2H7zM10 7h2v2h-2zM4 11h2v2H4zM7 11h2v2H7zM10 11h2v2h-2z" fill="#3b6ea8"/></svg>Calculator
  </div>
  <div class="task">
    <svg viewBox="0 0 16 16"><rect x="1" y="0" width="14" height="16" fill="#f5f5f5"/><text x="8" y="13" class="svg-g9">9</text></svg>v-rack and pinion tes...
  </div>
  <div class="tray">
    <span class="lang">EN</span>
    <svg viewBox="0 0 16 16"><path d="M1 3l6-1v6H1zM8 2l7-1v7H8zM1 9h6v5l-6-1zM8 9h7v6l-7-1z" fill="#fff"/></svg>
    <svg viewBox="0 0 16 16"><path d="M4 1l4 3-3 3-4-3zM12 1l3 3-4 3-3-3zM5 7l3 3-3 3-4-3zM11 7l4 3-4 3-3-3z" fill="#ddd"/><circle cx="11" cy="12" r="4" fill="#2fa32f"/></svg>
    <svg viewBox="0 0 16 16"><circle cx="8" cy="8" r="7" fill="#f2c21c"/><circle cx="8" cy="8" r="4" fill="#fff"/><circle cx="11" cy="12" r="4" fill="#2fa32f"/></svg>
    <svg viewBox="0 0 16 16"><rect width="16" height="16" rx="1" fill="#c80a0a"/><text x="8" y="12" class="svg-a">A</text></svg>
    <svg viewBox="0 0 16 16"><rect y="2" width="16" height="12" fill="#cfe6f7"/><rect x="3" y="5" width="5" height="2" fill="#3b86c8"/><rect x="10" y="4" width="4" height="4" fill="#e8601c"/></svg>
    <svg viewBox="0 0 16 16"><circle cx="8" cy="8" r="8" fill="#1ed760"/><path d="M3 6c4-1 7-1 10 1M4 8.500c3-1 6-1 8 1M5 11c2-.5 4-.5 6 .5" stroke="#111" stroke-width="1.3" fill="none"/></svg>
    <svg viewBox="0 0 16 16"><rect x="1" width="14" height="16" fill="#d8ead8"/><path d="M4 2l8 8M12 2l-8 8" stroke="#1c7a32" stroke-width="2"/><path d="M1 12h14v4H1z" fill="#eee"/></svg>
    <svg viewBox="0 0 16 16"><rect x="4" width="6" height="10" fill="#999"/><path d="M5 10h4l-1 6H6z" fill="#666"/><circle cx="11" cy="12" r="4" fill="#2fa32f"/></svg>
    <svg viewBox="0 0 16 16"><rect x=".5" y=".5" width="15" height="15" fill="#e8f0fa" stroke="#1c4fa0"/><path d="M3 3l9 10" stroke="#1c4fa0" stroke-width="2.5"/></svg>
    <svg viewBox="0 0 16 16"><path d="M1 14v-2h2v2zM4 14v-4h2v4zM7 14V8h2v6z" fill="#fff"/><path d="M10 14V6h2v8zM13 14V4h2v10z" fill="#666"/></svg>
    <svg viewBox="0 0 16 16"><path d="M2 6h3l5-4v12l-5-4H2z" fill="#eee"/><path d="M12 5c1 2 1 4 0 6" stroke="#bbb" fill="none"/></svg>
    <svg viewBox="0 0 16 16"><path d="M3 3h5v11H3z" fill="#ddd" stroke="#555"/><path d="M8 7h5M8 10h5" stroke="#fff" stroke-width="2"/><path d="M10 4v10" stroke="#fff"/></svg>
    <svg viewBox="0 0 16 16"><path d="M3 1v14" stroke="#fff"/><path d="M4 2h5v2h5l-2 3 2 2H8V7H4z" fill="#fff"/></svg>
    <span class="clock">2:50 PM</span>
    <i class="show-desk"></i>
  </div>
</footer>
</body>
</html>
```

FILE: styles.css
```css
* {
  box-sizing: border-box;
}

html, body {
  margin: 0;
  height: 1080px;
  overflow: hidden;
}

body {
  font-family: "Liberation Sans", Arial, sans-serif;
  font-size: 11px;
  color: #222;
  background: #2c3a48;
}

i, em {
  font-style: normal;
}

.defs {
  position: absolute;
  width: 0;
  height: 0;
}

.i {
  display: block;
  fill: none;
  stroke: #222;
  stroke-width: 1.2;
}

.sn { stroke: none; }
.sg { stroke: #555; }
.sb { stroke: #234; }
.sbr { stroke: #642; }
.sl { stroke: #aaa; stroke-width: .8; }
.w1 { stroke-width: 1; }
.w2 { stroke-width: 2; }

.wheel {
  stroke-width: 4;
}

.svg-q {
  font: bold 19px "Liberation Sans", sans-serif;
  fill: #fff;
  stroke: none;
  text-anchor: middle;
}

.svg-q.small {
  font-size: 14px;
}

.desk {
  display: flex;
  height: 1048px;
}

.win {
  display: flex;
  flex-direction: column;
  width: 960px;
  height: 1048px;
  overflow: hidden;
}

/* window chrome */
.title {
  display: flex;
  align-items: flex-start;
  height: 26px;
  flex: none;
  color: #111;
  font-size: 11.900px;
}

.rhino .title {
  background: linear-gradient(90deg, #bac9d8, #a9bccd 55%, #92a7bb);
  padding-left: 5px;
}

.gh .title {
  background: linear-gradient(90deg, #a8bbcc, #8fa6bb 20%, #7e95ab 60%, #86a0b8);
  padding-left: 5px;
}

.app {
  width: 16px;
  height: 16px;
  margin: 5px 4px 0 0;
}

.title-text {
  margin-top: 6px;
}

.caps {
  display: flex;
  margin-left: auto;
  margin-right: 8px;
  height: 18px;
  border: 1px solid #5a6a7a;
  border-top: 0;
  border-radius: 0 0 4px 4px;
  box-shadow: 0 1px 0 rgba(255,255,255,.6);
}

.cap {
  width: 26px;
  text-align: center;
  color: #fff;
  font: bold 12px/16px "DejaVu Sans", sans-serif;
  text-shadow: 0 0 2px #223;
  background: linear-gradient(#cfdae4, #8fa2b4 50%, #a3b5c6);
  border-right: 1px solid #5a6a7a;
}

.cap.close {
  width: 43px;
  border-right: 0;
  border-radius: 0 0 4px 0;
}

.cap.close.red {
  background: linear-gradient(#d99, #b6342c 50%, #c9503f);
}

.rhino {
  background: #dfe3ec;
  border-right: 3px solid #333a42;
}

.menu {
  display: flex;
  gap: 14px;
  align-items: center;
  height: 21px;
  flex: none;
  padding: 0 0 2px 11px;
  font-size: 11.500px;
  color: #555;
  background: linear-gradient(#eef1f6, #d9dee9);
}

.menu .wide {
  margin-right: 6px;
}

.cmd-box {
  display: flex;
  justify-content: space-between;
  flex: none;
  margin: 0 8px 0 10px;
  background: #fff;
  font-size: 11px;
  color: #111;
}

.history {
  height: 29px;
  margin-top: 2px;
  padding: 2px;
  border-bottom: 1px solid #9ba2ae;
}

.prompt {
  height: 18px;
  padding-left: 2px;
  line-height: 16px;
}

.prompt b {
  font-size: 11.500px;
}

.spin {
  display: flex;
  flex-direction: column;
  justify-content: space-between;
  width: 12px;
  margin: 2px -2px 2px 0;
  font-size: 7px;
  line-height: 9px;
  text-align: center;
  color: #333;
}

.spin.boxed {
  margin: 1px 0;
  color: #5e7fc0;
  background: #dfe7f3;
}

/* slanted tabs */
.tabs {
  display: flex;
  align-items: stretch;
  flex: none;
}

.tab {
  position: relative;
  z-index: 0;
  display: flex;
  align-items: center;
  padding: 0 7.500px 0 10px;
  color: #222;
  white-space: nowrap;
}

.tab::before {
  content: "";
  position: absolute;
  inset: 0 0 0 0;
  z-index: -1;
  background: linear-gradient(#d8ddeb, #ccd3e5);
  border: 1px solid #b3b9c8;
  border-bottom: 0;
  border-radius: 4px 4px 0 0;
  transform: skewX(-32deg);
  transform-origin: bottom left;
}

.tab.on {
  z-index: 2;
}

.tab.on::before {
  background: linear-gradient(#fff, #f3f5fa);
}

.tool-tabs {
  height: 14px;
  margin-top: 9px;
  padding-left: 12px;
  position: relative;
}

.tool-tabs .tab.on {
  padding-left: 7px;
}

.tool-tabs .tab.on::before {
  transform: none;
}

.tool-tabs .last {
  width: 31px;
  flex: none;
  padding-right: 0;
}

.more {
  margin-left: 1px;
  line-height: 12px;
  font-size: 12px;
}

.gear {
  width: 15px;
  height: 15px;
  margin-left: 3px;
}

.bar {
  display: flex;
  flex: none;
  height: 30px;
  padding: 3px 0 0 10px;
}

.t {
  position: relative;
  display: flex;
  align-items: center;
  justify-content: center;
  width: 28.030px;
  height: 26px;
}

.t .i {
  width: 22px;
  height: 22px;
}

.fly::after {
  content: "";
  position: absolute;
  right: 0;
  bottom: 0;
  border-left: 6px solid transparent;
  border-bottom: 6px solid #777;
}

/* rhino work area */
.work {
  display: flex;
  flex: none;
  height: 850px;
  padding-top: 6px;
}

.side {
  display: grid;
  grid-template-columns: 28px 28px;
  grid-auto-rows: 27.900px;
  align-content: start;
  width: 68.600px;
  padding: 14px 0 0 4px;
  background: linear-gradient(#b4b9c4, #b4b9c4) 6px 6px / 58px 2px no-repeat;
}

.side .i {
  width: 21px;
  height: 21px;
}

.dots {
  stroke: #1a2c6a;
  fill: #eef;
}

.vp-col {
  display: flex;
  flex-direction: column;
  width: 676px;
  margin-top: 5px;
}

.viewport {
  position: relative;
  height: 816px;
  background: linear-gradient(#b4b8c0, #8d9097);
  overflow: hidden;
}

.scene {
  display: block;
  width: 676px;
  height: 816px;
}

.ln path, .ln ellipse, path.ln {
  fill: none;
  vector-effect: non-scaling-stroke;
  stroke-width: 1;
}

.ln.ring ellipse {
  stroke-width: 1.300;
}

.ln path.cyan {
  stroke-width: 1.300;
}

.ln path.brown {
  stroke-width: 1;
}

.vp-head {
  position: absolute;
  left: 0;
  top: 0;
  display: flex;
  align-items: center;
  height: 18px;
  width: 87px;
  padding-left: 8px;
  background: #a1b6ce;
  font-size: 11.500px;
  color: #223;
}

.vp-head b {
  margin-left: auto;
  width: 11px;
  height: 100%;
  border-left: 1px solid #333;
  font: 7px/18px "DejaVu Sans", sans-serif;
  text-align: center;
}

.vp-tabs {
  height: 20px;
  margin-top: 1px;
}

.vp-tabs .tab {
  padding: 0 7px 0 10px;
  font-size: 11.500px;
}

.vp-tabs .tab::before {
  transform: skewX(14deg);
  transform-origin: top left;
  border: 1px solid #b3b9c8;
  border-top: 0;
  border-radius: 0 0 5px 5px;
}

.vp-tabs .tab.on {
  margin-right: 3px;
  padding: 0 9px 0 9px;
}

.vp-tabs .plus {
  color: #888;
  font-size: 10px;
  padding: 0 8px 0 13px;
}

/* layers panel */
.panel {
  display: flex;
  flex-direction: column;
  width: 203px;
  height: 825px;
  margin: 13px 0 0 8px;
}

.panel-tabs {
  height: 19px;
  padding-left: 0;
}

.panel-tabs .tab {
  gap: 3px;
  width: 45px;
  padding: 0 0 0 3px;
  font-size: 11px;
}

.panel-tabs .tab::before {
  transform: skewX(-18deg);
  border-radius: 4px 4px 0 0;
}

.panel-tabs .i {
  width: 14px;
  height: 14px;
  flex: none;
}

.panel-tabs .gear {
  margin: 3px 0 0 6px;
}

.panel-tools {
  display: flex;
  align-items: center;
  gap: 6px;
  height: 27px;
  padding-left: 3px;
  border-left: 1px solid #b3b9c8;
  border-right: 1px solid #b3b9c8;
  border-top: 1px solid #fff;
}

.panel-tools .i {
  width: 15px;
  height: 15px;
}

.layers {
  flex: 1;
  background: #fff;
  border-left: 1px solid #aab0bc;
  border-right: 1px solid #aab0bc;
}

.layer-head {
  display: grid;
  grid-template-columns: 133px 17px 17px 17px 1fr;
  height: 22px;
  color: #222;
  background: #fafbfc;
}

.layer-head span {
  border-right: 1px solid #e3e3e3;
}

.lh-name {
  padding: 5px 0 0 6px;
}

.layer-row {
  display: flex;
  align-items: center;
  height: 16px;
  padding-left: 9px;
  background: #3d95f2;
  color: #fff;
  font-weight: bold;
  font-size: 11.500px;
  border-bottom: 1px dotted #fff;
}

.lr-name {
  width: 128px;
}

.check {
  width: 13px;
  height: 13px;
}

.swatch {
  width: 12px;
  height: 12px;
  margin-left: 34px;
  background: #000;
  border: 1px solid #fff;
}

.hscroll {
  display: flex;
  align-items: center;
  justify-content: space-between;
  height: 18px;
  padding: 0 5px;
  font-size: 7px;
  color: #333;
  background: #eef0f4;
  border: 1px solid #aab0bc;
  border-top: 0;
}

.thumb {
  width: 72px;
  height: 15px;
  margin: 0 auto 0 22px;
  text-align: center;
  line-height: 14px;
  font-size: 8px;
  background: linear-gradient(#eee, #cfd3da);
  border: 1px solid #9aa0aa;
  border-radius: 2px;
}

/* osnap row */
.osnaps {
  display: flex;
  flex: none;
  align-items: center;
  gap: 6.300px;
  height: 19px;
  margin-top: 6px;
  padding-left: 15px;
  color: #333;
  font-size: 10.400px;
}

.snap {
  display: flex;
  align-items: center;
  gap: 6px;
}

.box {
  display: block;
  position: relative;
  width: 13px;
  height: 13px;
  background: linear-gradient(#e4e4e4, #fbfbfb);
  border: 1px solid #8e8f8f;
}

.box.on::after {
  content: "\2713";
  position: absolute;
  left: 1px;
  top: -2px;
  color: #1f3f8f;
  font: bold 11px "DejaVu Sans", sans-serif;
}

.box.round {
  width: 15px;
  height: 18px;
  border-radius: 4px;
  margin-right: -1px;
  background: linear-gradient(#fafafa, #dcdcdc);
}

.status {
  display: flex;
  flex: none;
  height: 22px;
  margin-top: 1px;
  padding-left: 3px;
  font-size: 12px;
  background: #e2e6ef;
  border-top: 1px solid #c8cdd8;
}

.c {
  display: flex;
  align-items: center;
  padding-left: 3px;
  border-right: 1px solid #cdd2dc;
  white-space: nowrap;
  color: #222;
}

.ctr {
  justify-content: center;
  padding: 0;
}

.w51 { width: 48px; }
.w73 { width: 73px; }
.w72 { width: 72px; }
.w74 { width: 74px; }
.w144 { width: 144px; }
.w62 { width: 64px; }
.w38 { width: 38px; }
.w46 { width: 45px; }
.w45 { width: 44px; }
.w71 { width: 71px; }
.w55 { width: 55px; }
.w89 { width: 89px; }
.w36 { width: 36px; }

.lit {
  font-weight: bold;
  background: #d6edfc;
}

.swatch.big {
  flex: none;
  width: 13px;
  height: 15px;
  margin: 0 3px 0 0;
  border: 0;
}

/* grasshopper */
.gh {
  background: #f3f3f3;
  border-left: 6px solid #aebccb;
  border-right: 5px solid #aebccb;
}

.gh .title {
  margin: 0 -5px 0 -6px;
}

.gh-menu {
  display: flex;
  flex: none;
  align-items: center;
  gap: 17.500px;
  height: 24px;
  padding-left: 12px;
  font-size: 11px;
  color: #111;
  background: #f6f6f6;
}

.doc-name {
  margin-left: auto;
  margin-right: 10px;
}

.gh-tabs {
  display: flex;
  flex: none;
  align-items: center;
  gap: 17px;
  height: 22px;
  padding-left: 1px;
  font-size: 11px;
  color: #777;
  background: #f3f3f3;
}

.gh-tabs .sp {
  margin-left: 5px;
}

.gh-tabs .on {
  margin-right: -10px;
  padding: 3px 6px 5px;
  margin-bottom: -1px;
  color: #111;
  background: #fff;
  border: 1px solid #bbb;
  border-bottom: 0;
  border-radius: 4px 4px 0 0;
  position: relative;
  z-index: 1;
}

.ribbon {
  display: flex;
  flex: none;
  gap: 3px;
  height: 88px;
  padding: 3px 0 0 2px;
  background: linear-gradient(#eee, #d9d9d9 60%, #d4d4d4);
  border-top: 1px solid #c0c0c0;
  border-bottom: 2px solid #888;
  border-radius: 6px 6px 0 0;
}

.rp {
  display: flex;
  flex-direction: column;
  height: 71px;
  border: 1px solid #aaa;
  border-radius: 5px;
  overflow: hidden;
  background: linear-gradient(#f2f2f2, #d8d8d8);
}

.rp:last-child {
  margin-left: 1px;
}

.rp-body {
  display: flex;
  flex: 1;
}

.gp {
  display: grid;
  grid-template-rows: 28px 28px;
  grid-auto-flow: column;
  grid-auto-columns: 28px;
  padding: 0 4px 0 5px;
  border-right: 1px solid #ccc;
  justify-items: center;
  align-items: center;
}

.gp:first-child {
  padding-left: 1px;
}

.gp:last-child {
  padding: 0 2px 0 4px;
  border-right: 0;
}

.gp:only-child {
  padding: 0 2px 0 1px;
}

.g {
  display: block;
  width: 24px;
  height: 24px;
}

.gt {
  font: bold 17px "Liberation Serif", serif;
  fill: #fff;
  text-anchor: middle;
}

.gt.sm {
  font-size: 13px;
}

.rp-foot {
  display: flex;
  align-items: center;
  justify-content: space-between;
  height: 13px;
  padding: 0 4px 0 0;
  color: #fff;
  font-size: 11.500px;
  background: linear-gradient(#333, #111);
}

.rp-foot span {
  flex: 1;
  text-align: center;
}

.rp-foot b {
  font-size: 8px;
  color: #999;
}

.gh-bar {
  display: flex;
  flex: none;
  align-items: center;
  height: 32px;
  padding-left: 6px;
  background: linear-gradient(#fff, #f6f6f6);
}

.bar-ic {
  width: 21px;
  height: 23px;
  margin-right: 7px;
}

.pen {
  margin-left: 4px;
}

.vsep {
  align-self: center;
  width: 1px;
  height: 22px;
  margin: 0 4px 0 2px;
  background: #bbb;
}

.combo {
  display: flex;
  align-items: center;
  justify-content: space-between;
  width: 69px;
  height: 24px;
  margin: 0 2px 0 0;
  padding: 0 5px 0 3px;
  background: #fff;
  border: 1px solid #dde;
  font: 13px "Liberation Sans", sans-serif;
}

.combo b, .drop {
  font: 7px "DejaVu Sans", sans-serif;
}

.drop {
  margin: 0 8px 0 -3px;
}

.bar-right .drop {
  margin-right: 5px;
}

.ml {
  margin-left: 4px;
}

.bar-right {
  display: flex;
  align-items: center;
  margin-left: auto;
}

.sel {
  display: block;
  padding: 2px;
  margin-right: 11px;
  border: 1px solid #3d8ee0;
}

.sel .i {
  margin: 0;
}

.canvas {
  position: relative;
  flex: none;
  height: 830px;
  overflow: hidden;
  background-color: #b9a1e6;
  background-image:
    linear-gradient(90deg, #ae97da 1px, transparent 1px),
    linear-gradient(#ae97da 1px, transparent 1px);
  background-size: 220.500px 74px;
  background-position: 67px 33px;
}

.wires {
  position: absolute;
  inset: 0;
  width: 949px;
  height: 830px;
  fill: none;
}

.wire-o {
  stroke: #443760;
  stroke-width: 4.500;
}

.wire-i {
  stroke: #8f7bb4;
  stroke-width: 1;
}

.port {
  position: absolute;
  width: 8px;
  height: 14px;
  background: #fff;
  border: 2px solid #111;
  border-radius: 50%;
}

.merge {
  position: absolute;
  left: 0;
  top: 236px;
  display: flex;
  width: 55px;
  height: 271px;
  background: linear-gradient(#f2f2f2, #d4d4d4 50%, #b9b9b9);
  border: 1px solid #888;
  border-left: 0;
  border-radius: 0 4px 4px 0;
}

.merge-band {
  display: flex;
  align-items: center;
  width: 23px;
  height: 261px;
  margin-top: 4px;
  border-radius: 0 4px 4px 0;
  background: linear-gradient(90deg, #222, #444);
  color: #fff;
}

.merge-band span {
  writing-mode: vertical-rl;
  transform: rotate(180deg);
  font: bold 19px/19px "Liberation Sans", sans-serif;
  letter-spacing: .5px;
}

.merge-out {
  align-self: center;
  margin-left: 7px;
  font: 13px "Liberation Sans", sans-serif;
  color: #222;
}

.merge .port {
  right: -7px;
  top: 120px;
}

.panel-y {
  position: absolute;
  background: #fffb55;
  border: 1px solid #39351a;
  border-radius: 4px;
  font: 16px "Liberation Mono", monospace;
  color: #38381c;
}

.main-panel {
  left: 186px;
  top: 30px;
  width: 385px;
  height: 745px;
}

.py-head {
  height: 24px;
  padding: 0 18px 0 0;
  line-height: 24px;
  text-align: right;
  font-size: 13px;
  color: #555;
  background: #dcd64e;
  border-radius: 3px 3px 0 0;
}

.py-list {
  height: 719px;
  overflow: hidden;
}

.row {
  display: flex;
  align-items: center;
  height: 23.600px;
  white-space: nowrap;
  background: #f5ef55;
}

.py-list .row:nth-child(odd) {
  background: #fffb55;
}

.n {
  align-self: stretch;
  display: flex;
  align-items: center;
  justify-content: flex-end;
  flex: none;
  width: 39px;
  padding-right: 6px;
  margin-right: 3px;
  border-right: 1px solid #e5df4e;
}

.py-scroll {
  position: absolute;
  right: 3px;
  top: 2px;
  width: 7px;
  height: 55px;
  background: #555;
  border-radius: 2px;
}

.port.in {
  left: -8px;
  top: 363px;
}

.port.out {
  right: -8px;
  top: 363px;
}

.behind {
  position: absolute;
  left: 690px;
  top: 435px;
  width: 89px;
  height: 40px;
  background: linear-gradient(#f5f5f5, #ccc);
  border: 1px solid #888;
  border-radius: 4px;
}

.behind i {
  display: block;
  width: 36px;
  height: 22px;
  margin: 4px auto 0;
  border-radius: 4px;
  background: linear-gradient(#777, #333);
}

.small-panel {
  left: 834px;
  top: 435px;
  width: 120px;
  height: 92px;
  font-size: 15px;
}

.small-panel .py-head {
  height: 28px;
}

.small-panel .row {
  align-items: flex-start;
  height: 62px;
  line-height: 20px;
  background: transparent;
}

.small-panel .n {
  align-items: flex-start;
  width: 20px;
  padding-right: 4px;
  margin-right: 4px;
}

.small-panel .port.in {
  top: 38px;
}

.tip {
  position: absolute;
  left: 629px;
  top: 454px;
  width: 163px;
  height: 56px;
  border: 1px solid #111;
  background: #ffffcc;
  font: 11px "Liberation Sans", sans-serif;
}

.tip-head {
  display: flex;
  align-items: center;
  height: 33px;
  padding: 0 0 3px 5px;
  background: #ffcc5a;
}

.tip-ic {
  width: 22px;
  height: 24px;
}

.tip-head em {
  margin-left: 12px;
  font-size: 14px;
  font-style: italic;
}

.tip-body {
  padding: 5px 0 0 6px;
  color: #111;
}

.widgets {
  position: absolute;
  left: 0;
  bottom: 0;
  display: flex;
  align-items: center;
  gap: 6px;
  height: 28px;
  padding: 0 8px 0 4px;
  background: linear-gradient(#ddd, #aaa);
  border: 1px solid #111;
  border-left: 0;
  border-bottom: 0;
}

.wd {
  width: 22px;
  height: 22px;
}

.wd-t {
  font: 7px "Liberation Sans", sans-serif;
  fill: #333;
  stroke: none;
  text-anchor: middle;
}

.wd-t.big {
  font-size: 9px;
  fill: #111;
}

.wd-on {
  display: block;
  margin: 0 -1px;
  border: 1px solid #111;
  border-radius: 3px;
  background: #bbb;
}

.compass {
  position: absolute;
  right: 6px;
  bottom: 6px;
  width: 48px;
  height: 48px;
}

.gh-status {
  display: flex;
  flex: 1;
  align-items: center;
  gap: 3px;
  padding-left: 3px;
  background: #fff;
  font-size: 10.800px;
}

.info {
  width: 15px;
  height: 19px;
}

.svg-i {
  font: bold 12px "Liberation Sans", sans-serif;
  fill: #1c4fc0;
  text-anchor: middle;
}

.ver {
  margin-left: auto;
  font-size: 12px;
  color: #888;
}

.grip {
  width: 12px;
  height: 12px;
  margin: 6px 0 0 6px;
  background: radial-gradient(#999 1px, transparent 1.500px) 0 0 / 4px 4px;
}

/* taskbar */
.taskbar {
  position: relative;
  display: flex;
  align-items: center;
  gap: 4px;
  height: 32px;
  padding-left: 61px;
  background: linear-gradient(#292c30, #0b0c0f 40%, #060708);
  color: #ddd;
  font-size: 11.600px;
  border-top: 1px solid #5b6066;
}

.orb {
  position: absolute;
  left: 8px;
  top: -4px;
  display: grid;
  grid-template-columns: 10px 10px;
  grid-auto-rows: 10px;
  gap: 1px;
  place-content: center;
  width: 38px;
  height: 36px;
  border-radius: 50%;
  background: radial-gradient(circle at 50% 30%, #a8c8e8, #2a6ea8 60%, #0d3458);
  border: 1px solid #0a2238;
}

.pane.r { background: #ea5a2a; border-radius: 3px 1px 1px 1px; }
.pane.g { background: #7cbf3a; border-radius: 1px 3px 1px 1px; }
.pane.b { background: #3a9ce8; border-radius: 1px 1px 1px 3px; }
.pane.y { background: #f5c52a; border-radius: 1px 1px 3px 1px; }

.task {
  display: flex;
  align-items: center;
  gap: 5px;
  flex: none;
  width: 158px;
  height: 28px;
  padding-left: 7px;
  white-space: nowrap;
  overflow: hidden;
  background: linear-gradient(rgba(255,255,255,.2), rgba(255,255,255,.07) 45%, rgba(255,255,255,.02));
  border: 1px solid #4a4d50;
  border-radius: 2px;
}

.task.on {
  background: linear-gradient(rgba(255,255,255,.35), rgba(255,255,255,.2) 45%, rgba(255,255,255,.1));
  border-color: #999;
}

.task svg {
  flex: none;
  width: 16px;
  height: 17px;
}

.svg-g9 {
  font: bold 15px "Liberation Sans", sans-serif;
  fill: #1c34b0;
  stroke: #f2d21c;
  stroke-width: .5;
  text-anchor: middle;
}

.svg-a {
  font: bold 11px "Liberation Sans", sans-serif;
  fill: #fff;
  text-anchor: middle;
}

.tray {
  display: flex;
  align-items: center;
  gap: 8px;
  margin-left: auto;
  height: 100%;
  color: #eee;
}

.tray svg {
  flex: none;
  width: 16px;
  height: 16px;
}

.lang {
  margin-right: 8px;
  font-size: 12px;
}

.clock {
  margin: 0 0 0 12px;
  font-size: 11.600px;
}

.show-desk {
  width: 10px;
  height: 28px;
  margin: 0 3px 0 8px;
  border: 1px solid #555;
  background: linear-gradient(#444, #222);
}
```
